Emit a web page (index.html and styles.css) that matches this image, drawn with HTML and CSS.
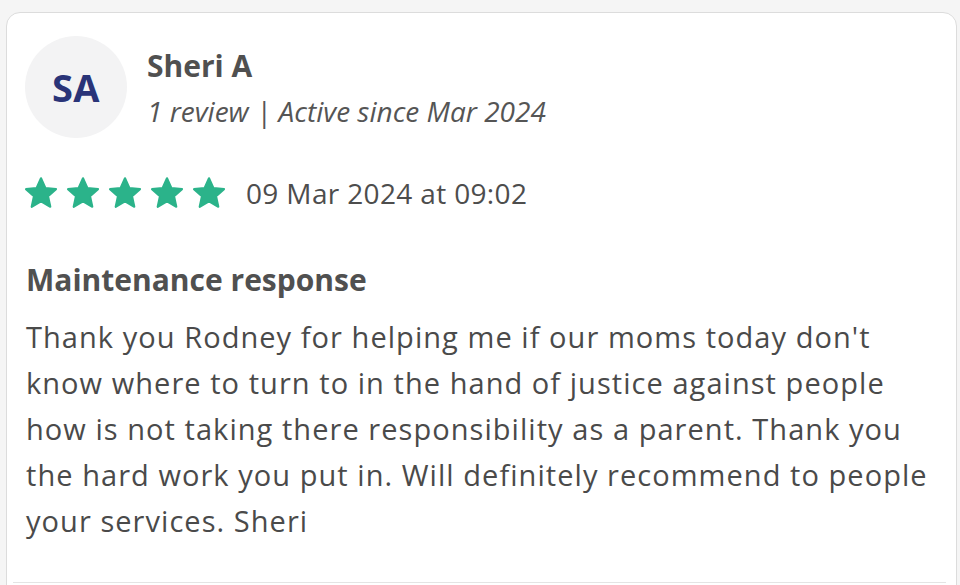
FILE: index.html
```html
<!DOCTYPE html>
<html>
<head>
<meta charset="utf-8">
<link rel="stylesheet" href="styles.css">
</head>
<body>
<div class="page">
  <div class="card">
    <div class="header">
      <div class="avatar">SA</div>
      <div class="who">
        <div class="name">Sheri A</div>
        <div class="meta">1 review | Active since Mar 2024</div>
      </div>
    </div>
    <div class="rating">
      <div class="stars">
        <svg class="star" viewBox="0 0 24 24"><path d="M12 2.2l2.9 6.5 7.1.7-5.3 4.8 1.5 7L12 17.6l-6.2 3.6 1.5-7L2 9.4l7.1-.7z"/></svg>
        <svg class="star" viewBox="0 0 24 24"><path d="M12 2.2l2.9 6.5 7.1.7-5.3 4.8 1.5 7L12 17.6l-6.2 3.6 1.5-7L2 9.4l7.1-.7z"/></svg>
        <svg class="star" viewBox="0 0 24 24"><path d="M12 2.2l2.9 6.5 7.1.7-5.3 4.8 1.5 7L12 17.6l-6.2 3.6 1.5-7L2 9.4l7.1-.7z"/></svg>
        <svg class="star" viewBox="0 0 24 24"><path d="M12 2.2l2.9 6.5 7.1.7-5.3 4.8 1.5 7L12 17.6l-6.2 3.6 1.5-7L2 9.4l7.1-.7z"/></svg>
        <svg class="star" viewBox="0 0 24 24"><path d="M12 2.2l2.9 6.5 7.1.7-5.3 4.8 1.5 7L12 17.6l-6.2 3.6 1.5-7L2 9.4l7.1-.7z"/></svg>
      </div>
      <div class="date">09 Mar 2024 at 09:02</div>
    </div>
    <h2 class="title">Maintenance response</h2>
    <p class="body">Thank you Rodney for helping me if our moms today don't know where to turn to in the hand of justice against people how is not taking there responsibility as a parent. Thank you the hard work you put in. Will definitely recommend to people your services. Sheri</p>
    <div class="divider"></div>
  </div>
</div>
</body>
</html>
```
FILE: styles.css
```css
* { box-sizing: border-box; }
html, body { margin: 0; padding: 0; }
body {
  background: #f5f5f5;
  font-family: "Open Sans", "Noto Sans", sans-serif;
  color: #4a4a4a;
  width: 960px;
  height: 585px;
  overflow: hidden;
}
.page {
  padding: 12px 3px 0 6px;
}
.card {
  background: #ffffff;
  border: 1.5px solid #dcdcdc;
  border-radius: 14px;
  padding: 23px 20px 0 18px;
  height: 640px;
}
.header {
  display: flex;
  align-items: flex-start;
  gap: 20px;
}
.avatar {
  width: 102px;
  height: 102px;
  border-radius: 50%;
  background: #f3f3f4;
  color: #2a3478;
  font-weight: 700;
  font-size: 38px;
  letter-spacing: 0.5px;
  display: flex;
  align-items: center;
  justify-content: center;
  flex: none;
}
.who {
  padding-top: 9.5px;
}
.name {
  font-size: 30px;
  font-weight: 700;
  line-height: 40px;
  color: #505050;
}
.meta {
  font-size: 28px;
  font-style: italic;
  line-height: 38px;
  color: #555555;
  margin-top: 6px;
}
.rating {
  display: flex;
  align-items: center;
  height: 38px;
  margin-top: 35.5px;
}
.stars {
  display: flex;
  gap: 6px;
  margin-left: -2px;
}
.star {
  width: 36px;
  height: 36px;
  fill: #2bb38a;
  stroke: #2bb38a;
  stroke-width: 1.4;
  stroke-linejoin: round;
}
.date {
  font-size: 28px;
  line-height: 38px;
  letter-spacing: 0.35px;
  margin-left: 19px;
  color: #4d4d4d;
}
.title {
  font-size: 30px;
  font-weight: 700;
  margin: 48px 0 0 1px;
  line-height: 40px;
  color: #505050;
}
.body {
  font-size: 29px;
  line-height: 46px;
  letter-spacing: 1.05px;
  margin: 14.3px 0 0 1px;
  color: #4a4a4a;
}
.divider {
  border-top: 1px solid #e4e4e4;
  margin: 38px -10px 0 -12px;
}
```
